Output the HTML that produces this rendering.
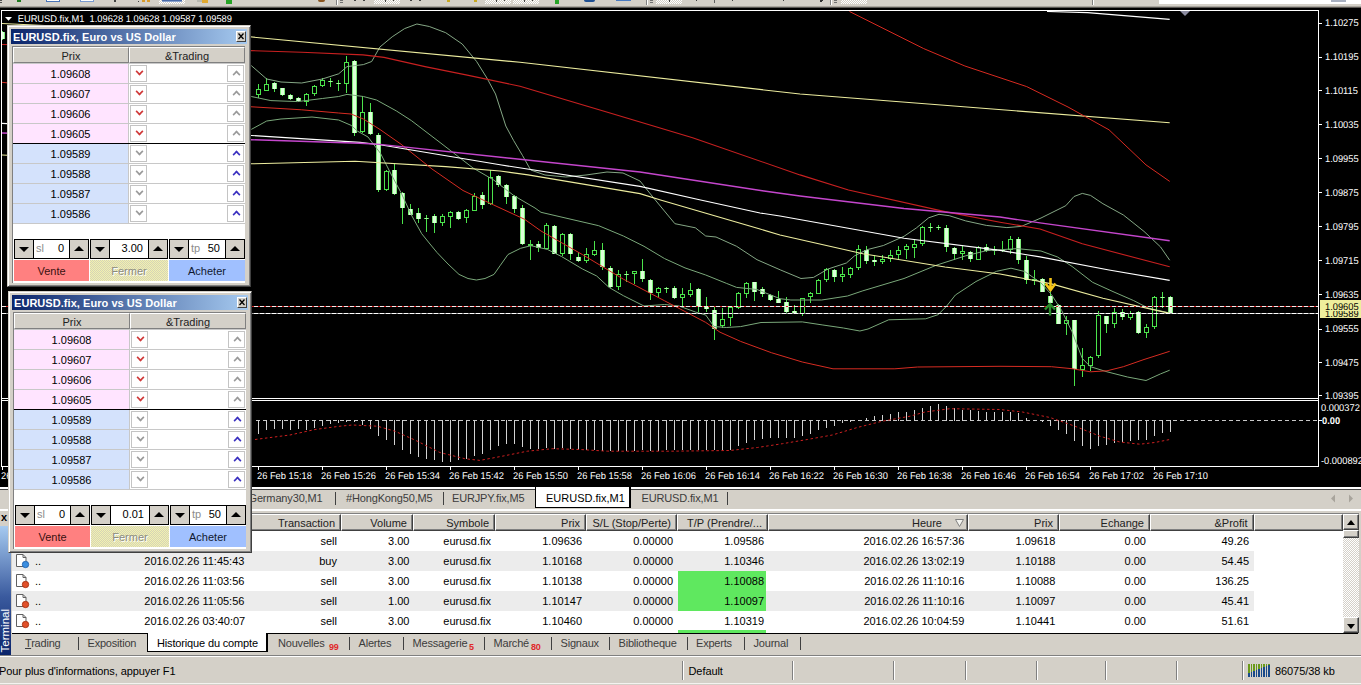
<!DOCTYPE html>
<html><head><meta charset="utf-8"><title>EURUSD.fix,M1</title>
<style>
*{box-sizing:border-box;margin:0;padding:0}
html,body{width:1361px;height:685px;overflow:hidden;background:#d4d0c8}
body{position:relative;font-family:"Liberation Sans",Arial,sans-serif;font-size:11px;color:#000;line-height:1}
i{font-style:normal}
.abs{position:absolute}
/* toolbar strip */
#tb{position:absolute;left:0;top:0;width:1361px;height:6px;background:#d4d0c8;overflow:hidden}
#tb i{position:absolute;display:block}
#tbl1{position:absolute;left:0;top:6px;width:1361px;height:1px;background:#aaa69e}
#tbl2{position:absolute;left:0;top:7px;width:1361px;height:1px;background:#5a5854}
/* dialogs */
.dlg{position:absolute;width:244px;height:262px;background:#d4d0c8;border:1px solid;border-color:#d4d0c8 #404040 #404040 #d4d0c8;box-shadow:inset 1px 1px 0 #fff, inset -1px -1px 0 #808080}
.ttl{position:absolute;left:3px;top:3px;width:236px;height:15px;background:linear-gradient(90deg,#0a246a 0%,#a6caf0 100%);color:#fff;font-weight:bold;font-size:11px}
.ttl span{position:absolute;left:2px;top:2.5px;white-space:nowrap;letter-spacing:0.05px}
.cls{position:absolute;right:1px;top:2px;width:10px;height:11px;background:#d4d0c8;border:1px solid;border-color:#fff #404040 #404040 #fff;display:block}
.cls svg{position:absolute;left:0;top:0}
.lst{position:absolute;left:4px;top:20px;width:233px;height:237px;background:#fff;border-left:1px solid #808080;border-top:1px solid #808080}
.hd{position:absolute;left:0;top:0;width:232px;height:16px}
.hd div{position:absolute;top:0;height:16px;background:#d4d0c8;border:1px solid;border-color:#fff #808080 #808080 #fff;text-align:center;padding-top:3px;color:#222}
.h1{left:0;width:116px}.h2{left:116px;width:116px}
.r{position:relative;height:20px;width:232px;border-top:1px solid #c8c8c8}
.r:last-child{height:21px;border-bottom:1px solid #c8c8c8}
.r:nth-child(2){margin-top:16px}
.r.first{border-top:1px solid #000}
.r .p{position:absolute;left:0;top:0;width:115px;height:19px;text-align:center;padding-top:4.5px;border-right:0}

.ask .p{background:#ffe4ff}.bid .p{background:#d4e2fc}
.r .t{position:absolute;left:115px;top:0;width:117px;height:19px;border-left:1px solid #c8c8c8;background:#fff}
.b{position:absolute;top:1px;width:17px;height:17px;border:1px solid #c4c4c4;background:#fff;display:block}

.b.dn{left:1px}.b.up{right:1px}
.b:after{content:"";position:absolute;left:4.5px;width:5px;height:5px;border:solid;border-width:0 2px 2px 0}
.b.dn:after{top:1.5px;transform:rotate(45deg) scale(.8)}
.b.up:after{top:4.5px;transform:rotate(-135deg) scale(.8)}
.red:after{border-color:#d03838}.gry:after{border-color:#9a9a9a}.blu:after{border-color:#3a30c0}
.spn{position:absolute;left:6px;top:213px;width:231px;height:20px}
.sg{position:absolute;top:0;height:20px;border:1px solid #000;background:#fff}
.ab{position:absolute;top:0;width:18px;height:18px;background:#d4d0c8;display:block}
.ab.d{left:0;border-right:1px solid #000;width:19px}
.ab.u{right:0;border-left:1px solid #000;width:19px}
.ab:after{content:"";position:absolute;left:4px;top:7px;border:5px solid transparent}
.ab.d:after{border-top:5px solid #000;border-bottom:0}
.ab.u:after{border-bottom:5px solid #000;border-top:0;top:6px}
.fld{position:absolute;left:19px;top:0;height:18px;font-size:11px}
.fld em{position:absolute;left:2px;top:3px;color:#8c8c8c;font-style:normal}
.fld b{position:absolute;right:5px;top:3px;font-weight:normal}
.btns{position:absolute;left:6px;top:234px;width:231px;height:21px}
.bt{position:absolute;top:0;height:21px;text-align:center;padding-top:6px;font-size:11px}
.sell{left:0;width:75px;background:#ff8080;color:#3a1010}
.cl{left:76px;width:78px;background:#e4e2b2;background-image:repeating-conic-gradient(#f2f2b0 0 25%,#d6d3b6 0 50%);background-size:2px 2px;color:#8a8a80;text-shadow:1px 1px 0 #fff}
.buy{left:155px;width:76px;background:#a0c0ff;color:#101830}
/* chart tabs */
#ctabs{position:absolute;left:0;top:489px;width:1361px;height:20px;border-top:1px solid #404040;background:#d4d0c8;color:#3c3c3c;white-space:nowrap}
#ctabs span{position:absolute;top:3px;letter-spacing:-0.15px}
#ctabs i{position:absolute;top:2px;width:1px;height:13px;background:#404040;display:block}
#ctl{position:absolute;left:0;top:487px;width:1361px;height:2px;background:#fff}
#atab{position:absolute;left:535px;top:487px;width:96px;height:21px;background:#fff;border:1px solid #000;border-top:0;border-right-width:2px;color:#000}
#atab span{position:absolute;left:10px;top:6px}
/* terminal */
#tsep{position:absolute;left:0;top:509px;width:1361px;height:2px;background:#fff}
#tside{position:absolute;left:0;top:526px;width:11px;height:129px;background:linear-gradient(180deg,#a6caf0 0%,#3a5a9e 55%,#0a246a 100%)}
#tside span{position:absolute;left:0;bottom:3px;width:11px;color:#fff;writing-mode:vertical-rl;transform:rotate(180deg);font-size:11.5px;line-height:11px;white-space:nowrap}
#tx{position:absolute;left:1px;top:512px;font-weight:bold;font-size:11px}
#tbl{position:absolute;left:12px;top:513px;width:1346px;height:120px;background:#fff}
.th{position:absolute;top:514px;height:17px;background:#d4d0c8;border:1px solid;border-color:#fff #404040 #404040 #fff;box-shadow:inset -1px -1px 0 #808080;color:#222;white-space:nowrap}
.th span{position:absolute;top:3px;margin-right:-1px}
.tr{position:absolute;left:12px;width:1242px;height:20px;background:#fff;white-space:nowrap}
.tr.alt{background:#ececec}
.tr .c{position:absolute;top:4.5px}
.tr .ic{position:absolute;left:3px;top:2px}
.gc{position:absolute;left:666px;top:0;width:88px;height:20px;background:#5fe85f}
#sb{position:absolute;left:1343px;top:514px;width:16px;height:119px;background:#e9e7e3;background-image:repeating-conic-gradient(#fff 0 25%,#d4d0c8 0 50%);background-size:2px 2px}
.sbb{position:absolute;left:0;width:16px;height:16px;background:#d4d0c8;border:1px solid;border-color:#fff #404040 #404040 #fff;box-shadow:inset -1px -1px 0 #808080}
.sbb:after{content:"";position:absolute;left:3px;top:5px;border:4px solid transparent}
.sbb.u:after{border-bottom:5px solid #000;border-top:0}
.sbb.d:after{border-top:5px solid #000;border-bottom:0;top:6px}
#tbot{position:absolute;left:12px;top:633px;width:1346px;height:1px;background:#000}
#ttabs{position:absolute;left:12px;top:634px;width:1349px;height:20px;color:#3c3c3c;white-space:nowrap}
#ttabs span{position:absolute;top:4px;letter-spacing:-0.2px}
#ttabs i{position:absolute;top:3px;width:1px;height:13px;background:#404040;display:block}
#ttabs b{position:absolute;top:9px;color:#e02828;font-size:9px;font-weight:bold;letter-spacing:-0.3px}
#tatab{position:absolute;left:147px;top:633px;width:121px;height:19px;background:#fff;border:1px solid #000;border-top:0;border-right-width:2px;color:#000}
#tatab span{position:absolute;left:9px;top:5px;white-space:nowrap;letter-spacing:-0.15px}
/* status */
#sl1{position:absolute;left:0;top:655px;width:1361px;height:1px;background:#808080}
#sl2{position:absolute;left:0;top:656px;width:1361px;height:1px;background:#fff}
#st{position:absolute;left:0;top:657px;width:1361px;height:28px;background:#d4d0c8;white-space:nowrap}
#st span{position:absolute;top:9px;font-size:11px;color:#000;letter-spacing:-0.08px}
#st i{position:absolute;top:4px;width:2px;height:19px;border-left:1px solid #808080;border-right:1px solid #fff;display:block}
#stb{position:absolute;left:0;top:683px;width:1361px;height:1px;background:#f4f3f0}
</style></head><body>
<div id="tb">
<i style="left:0px;top:0px;width:2px;height:1px;background:#505050"></i>
<i style="left:0px;top:2px;width:2px;height:1px;background:#505050"></i>
<i style="left:17px;top:0px;width:4px;height:2px;background:#1f7a1f"></i>
<i style="left:46px;top:0px;width:14px;height:2px;background:#fff;border:1px solid #4a74b8;border-top:0"></i>
<i style="left:80px;top:0px;width:14px;height:2px;background:#fff;border:1px solid #7a9ad0;border-top:0"></i>
<i style="left:114px;top:0px;width:2px;height:2px;background:#404040"></i>
<i style="left:138px;top:1px;width:1px;height:1px;background:#404040"></i>
<i style="left:142px;top:0px;width:3px;height:2px;background:#d89a2a"></i>
<i style="left:147px;top:0px;width:3px;height:2px;background:#d89a2a"></i>
<i style="left:159px;top:0px;width:26px;height:4px;background:#ebe9e4;background-image:repeating-conic-gradient(#fff 0 25%,#d4d0c8 0 50%);background-size:2px 2px"></i>
<i style="left:162px;top:0px;width:20px;height:1px;background:#4a6aa8"></i>
<i style="left:162px;top:1px;width:20px;height:1px;background:#8aa2cc"></i>
<i style="left:197px;top:0px;width:5px;height:2px;background:#b8b8b0"></i>
<i style="left:202px;top:0px;width:6px;height:3px;background:#e0a830"></i>
<i style="left:226px;top:0px;width:6px;height:4px;background:#28a428"></i>
<i style="left:318px;top:0px;width:7px;height:2px;background:#8a5520;border-radius:0 0 4px 4px"></i>
<i style="left:336px;top:0;width:2px;height:5px;border-left:1px solid #808080;border-right:1px solid #fff"></i>
<i style="left:340px;top:0px;width:3px;height:1px;background:#707070"></i><i style="left:340px;top:2px;width:3px;height:1px;background:#707070"></i>
<i style="left:354px;top:0px;width:2px;height:1px;background:#404040"></i>
<i style="left:363px;top:0px;width:2px;height:1px;background:#404040"></i>
<i style="left:374px;top:0px;width:26px;height:4px;background:#ebe9e4;background-image:repeating-conic-gradient(#fff 0 25%,#d4d0c8 0 50%);background-size:2px 2px"></i>
<i style="left:385px;top:0px;width:1px;height:2px;background:#404040"></i>
<i style="left:393px;top:0px;width:1px;height:1px;background:#404040"></i>
<i style="left:410px;top:0px;width:2px;height:1px;background:#404040"></i>
<i style="left:419px;top:0px;width:2px;height:1px;background:#404040"></i>
<i style="left:447px;top:0px;width:3px;height:2px;background:#c8a820"></i>
<i style="left:474px;top:0px;width:3px;height:2px;background:#c8a820"></i>
<i style="left:485px;top:0px;width:26px;height:4px;background:#ebe9e4;background-image:repeating-conic-gradient(#fff 0 25%,#d4d0c8 0 50%);background-size:2px 2px"></i>
<i style="left:496px;top:0px;width:1px;height:2px;background:#404040"></i>
<i style="left:504px;top:0px;width:1px;height:1px;background:#404040"></i>
<i style="left:513px;top:0px;width:26px;height:4px;background:#ebe9e4;background-image:repeating-conic-gradient(#fff 0 25%,#d4d0c8 0 50%);background-size:2px 2px"></i>
<i style="left:524px;top:0px;width:1px;height:2px;background:#404040"></i>
<i style="left:532px;top:0px;width:1px;height:1px;background:#404040"></i>
<i style="left:555px;top:0px;width:4px;height:4px;background:#28a428"></i>
<i style="left:584px;top:0px;width:11px;height:2px;background:#1f4f92;border-radius:0 0 6px 6px"></i>
<i style="left:616px;top:0px;width:15px;height:1px;background:#4a7ac0"></i>
<i style="left:646px;top:0;width:2px;height:5px;border-left:1px solid #808080;border-right:1px solid #fff"></i>
<i style="left:650px;top:0px;width:3px;height:1px;background:#707070"></i><i style="left:650px;top:2px;width:3px;height:1px;background:#707070"></i>
<i style="left:656px;top:0px;width:26px;height:4px;background:#ebe9e4;background-image:repeating-conic-gradient(#fff 0 25%,#d4d0c8 0 50%);background-size:2px 2px"></i>
<i style="left:669px;top:0px;width:1px;height:2px;background:#404040"></i>
<i style="left:696px;top:0px;width:1px;height:1px;background:#404040"></i>
<i style="left:714px;top:0px;width:1px;height:3px;background:#606060"></i>
<i style="left:732px;top:0px;width:1px;height:1px;background:#404040"></i>
<i style="left:783px;top:0px;width:1px;height:1px;background:#404040"></i>
<i style="left:820px;top:0px;width:3px;height:1px;background:#303030"></i>
<i style="left:820px;top:1px;width:2px;height:1px;background:#303030"></i>
<i style="left:830px;top:0;width:2px;height:5px;border-left:1px solid #808080;border-right:1px solid #fff"></i>
<i style="left:834px;top:0px;width:3px;height:1px;background:#707070"></i><i style="left:834px;top:2px;width:3px;height:1px;background:#707070"></i>
<i style="left:841px;top:0px;width:26px;height:4px;background:#ebe9e4;background-image:repeating-conic-gradient(#fff 0 25%,#d4d0c8 0 50%);background-size:2px 2px"></i>
<i style="left:1092px;top:0;width:2px;height:5px;border-left:1px solid #808080;border-right:1px solid #fff"></i>
<i style="left:1159px;top:0px;width:202px;height:4px;background:#fff"></i>
<i style="left:1331px;top:0px;width:15px;height:2px;background:#a8b0c0"></i>
</div>
<div id="tbl1"></div><div id="tbl2"></div>
<svg id="chart" width="1361" height="490" viewBox="0 0 1361 490" style="position:absolute;left:0;top:0">
<rect x="0" y="8" width="1361" height="482" fill="#000"/>
<defs><clipPath id="cm"><rect x="2" y="11" width="1316" height="387"/></clipPath><clipPath id="cs"><rect x="2" y="401" width="1316" height="65"/></clipPath></defs>
<g clip-path="url(#cm)" shape-rendering="crispEdges">
<rect x="2" y="31" width="1" height="9" fill="#4be34b"/>
<rect x="0" y="32" width="5" height="7" fill="#7cec78"/>
<rect x="1" y="32" width="3" height="7" fill="#dcffd8"/>
<rect x="258" y="84" width="1" height="14" fill="#4be34b"/>
<rect x="256.5" y="89.5" width="4" height="5" fill="#000" stroke="#4be34b" stroke-width="1"/>
<rect x="266" y="78" width="1" height="13" fill="#4be34b"/>
<rect x="264.5" y="84.5" width="4" height="6" fill="#000" stroke="#4be34b" stroke-width="1"/>
<rect x="274" y="82" width="1" height="10" fill="#4be34b"/>
<rect x="272" y="83" width="5" height="6" fill="#7cec78"/>
<rect x="273" y="83" width="3" height="6" fill="#dcffd8"/>
<rect x="282" y="88" width="1" height="8" fill="#4be34b"/>
<rect x="280" y="88" width="5" height="7" fill="#7cec78"/>
<rect x="281" y="88" width="3" height="7" fill="#dcffd8"/>
<rect x="290" y="94" width="1" height="6" fill="#4be34b"/>
<rect x="288" y="95" width="5" height="4" fill="#7cec78"/>
<rect x="289" y="95" width="3" height="4" fill="#dcffd8"/>
<rect x="298" y="97" width="1" height="5" fill="#4be34b"/>
<rect x="296" y="98" width="5" height="3" fill="#7cec78"/>
<rect x="297" y="98" width="3" height="3" fill="#dcffd8"/>
<rect x="306" y="93" width="1" height="13" fill="#4be34b"/>
<rect x="304.5" y="94.5" width="4" height="7" fill="#000" stroke="#4be34b" stroke-width="1"/>
<rect x="314" y="85" width="1" height="11" fill="#4be34b"/>
<rect x="312.5" y="86.5" width="4" height="7" fill="#000" stroke="#4be34b" stroke-width="1"/>
<rect x="322" y="78" width="1" height="9" fill="#4be34b"/>
<rect x="320.5" y="80.5" width="4" height="5" fill="#000" stroke="#4be34b" stroke-width="1"/>
<rect x="330" y="78" width="1" height="9" fill="#4be34b"/>
<rect x="328" y="81" width="5" height="1" fill="#4be34b"/>
<rect x="329" y="81" width="3" height="1" fill="#a8f5a0"/>
<rect x="338" y="80" width="1" height="11" fill="#4be34b"/>
<rect x="336" y="83" width="5" height="1" fill="#4be34b"/>
<rect x="337" y="83" width="3" height="1" fill="#a8f5a0"/>
<rect x="346" y="56" width="1" height="37" fill="#4be34b"/>
<rect x="344.5" y="62.5" width="4" height="21" fill="#000" stroke="#4be34b" stroke-width="1"/>
<rect x="354" y="60" width="1" height="76" fill="#4be34b"/>
<rect x="352" y="61" width="5" height="72" fill="#7cec78"/>
<rect x="353" y="61" width="3" height="72" fill="#dcffd8"/>
<rect x="362" y="96" width="1" height="37" fill="#4be34b"/>
<rect x="360.5" y="112.5" width="4" height="19" fill="#000" stroke="#4be34b" stroke-width="1"/>
<rect x="370" y="103" width="1" height="32" fill="#4be34b"/>
<rect x="368" y="112" width="5" height="22" fill="#7cec78"/>
<rect x="369" y="112" width="3" height="22" fill="#dcffd8"/>
<rect x="378" y="133" width="1" height="59" fill="#4be34b"/>
<rect x="376" y="135" width="5" height="55" fill="#7cec78"/>
<rect x="377" y="135" width="3" height="55" fill="#dcffd8"/>
<rect x="386" y="170" width="1" height="21" fill="#4be34b"/>
<rect x="384.5" y="171.5" width="4" height="18" fill="#000" stroke="#4be34b" stroke-width="1"/>
<rect x="394" y="163" width="1" height="32" fill="#4be34b"/>
<rect x="392" y="170" width="5" height="24" fill="#7cec78"/>
<rect x="393" y="170" width="3" height="24" fill="#dcffd8"/>
<rect x="402" y="192" width="1" height="32" fill="#4be34b"/>
<rect x="400" y="193" width="5" height="15" fill="#7cec78"/>
<rect x="401" y="193" width="3" height="15" fill="#dcffd8"/>
<rect x="410" y="204" width="1" height="11" fill="#4be34b"/>
<rect x="408" y="209" width="5" height="6" fill="#7cec78"/>
<rect x="409" y="209" width="3" height="6" fill="#dcffd8"/>
<rect x="418" y="208" width="1" height="15" fill="#4be34b"/>
<rect x="416" y="213" width="5" height="6" fill="#7cec78"/>
<rect x="417" y="213" width="3" height="6" fill="#dcffd8"/>
<rect x="426" y="215" width="1" height="17" fill="#4be34b"/>
<rect x="424" y="218" width="5" height="1" fill="#4be34b"/>
<rect x="425" y="218" width="3" height="1" fill="#a8f5a0"/>
<rect x="434" y="214" width="1" height="19" fill="#4be34b"/>
<rect x="432" y="216" width="5" height="7" fill="#7cec78"/>
<rect x="433" y="216" width="3" height="7" fill="#dcffd8"/>
<rect x="442" y="214" width="1" height="12" fill="#4be34b"/>
<rect x="440.5" y="216.5" width="4" height="6" fill="#000" stroke="#4be34b" stroke-width="1"/>
<rect x="450" y="211" width="1" height="17" fill="#4be34b"/>
<rect x="448.5" y="212.5" width="4" height="4" fill="#000" stroke="#4be34b" stroke-width="1"/>
<rect x="458" y="211" width="1" height="9" fill="#4be34b"/>
<rect x="456" y="212" width="5" height="7" fill="#7cec78"/>
<rect x="457" y="212" width="3" height="7" fill="#dcffd8"/>
<rect x="466" y="209" width="1" height="14" fill="#4be34b"/>
<rect x="464.5" y="210.5" width="4" height="7" fill="#000" stroke="#4be34b" stroke-width="1"/>
<rect x="474" y="193" width="1" height="18" fill="#4be34b"/>
<rect x="472.5" y="196.5" width="4" height="14" fill="#000" stroke="#4be34b" stroke-width="1"/>
<rect x="482" y="192" width="1" height="17" fill="#4be34b"/>
<rect x="480" y="195" width="5" height="10" fill="#7cec78"/>
<rect x="481" y="195" width="3" height="10" fill="#dcffd8"/>
<rect x="490" y="170" width="1" height="35" fill="#4be34b"/>
<rect x="488.5" y="177.5" width="4" height="26" fill="#000" stroke="#4be34b" stroke-width="1"/>
<rect x="498" y="175" width="1" height="12" fill="#4be34b"/>
<rect x="496" y="176" width="5" height="9" fill="#7cec78"/>
<rect x="497" y="176" width="3" height="9" fill="#dcffd8"/>
<rect x="506" y="184" width="1" height="20" fill="#4be34b"/>
<rect x="504" y="185" width="5" height="12" fill="#7cec78"/>
<rect x="505" y="185" width="3" height="12" fill="#dcffd8"/>
<rect x="514" y="195" width="1" height="18" fill="#4be34b"/>
<rect x="512" y="196" width="5" height="13" fill="#7cec78"/>
<rect x="513" y="196" width="3" height="13" fill="#dcffd8"/>
<rect x="522" y="205" width="1" height="40" fill="#4be34b"/>
<rect x="520" y="208" width="5" height="36" fill="#7cec78"/>
<rect x="521" y="208" width="3" height="36" fill="#dcffd8"/>
<rect x="530" y="240" width="1" height="20" fill="#4be34b"/>
<rect x="528.5" y="244.5" width="4" height="1" fill="#000" stroke="#4be34b" stroke-width="1"/>
<rect x="538" y="241" width="1" height="11" fill="#4be34b"/>
<rect x="536" y="244" width="5" height="4" fill="#7cec78"/>
<rect x="537" y="244" width="3" height="4" fill="#dcffd8"/>
<rect x="546" y="223" width="1" height="26" fill="#4be34b"/>
<rect x="544.5" y="225.5" width="4" height="23" fill="#000" stroke="#4be34b" stroke-width="1"/>
<rect x="554" y="225" width="1" height="29" fill="#4be34b"/>
<rect x="552" y="226" width="5" height="28" fill="#7cec78"/>
<rect x="553" y="226" width="3" height="28" fill="#dcffd8"/>
<rect x="562" y="233" width="1" height="23" fill="#4be34b"/>
<rect x="560.5" y="234.5" width="4" height="19" fill="#000" stroke="#4be34b" stroke-width="1"/>
<rect x="570" y="233" width="1" height="27" fill="#4be34b"/>
<rect x="568" y="234" width="5" height="20" fill="#7cec78"/>
<rect x="569" y="234" width="3" height="20" fill="#dcffd8"/>
<rect x="578" y="252" width="1" height="10" fill="#4be34b"/>
<rect x="576" y="257" width="5" height="4" fill="#7cec78"/>
<rect x="577" y="257" width="3" height="4" fill="#dcffd8"/>
<rect x="586" y="248" width="1" height="15" fill="#4be34b"/>
<rect x="584.5" y="254.5" width="4" height="6" fill="#000" stroke="#4be34b" stroke-width="1"/>
<rect x="594" y="241" width="1" height="15" fill="#4be34b"/>
<rect x="592.5" y="250.5" width="4" height="4" fill="#000" stroke="#4be34b" stroke-width="1"/>
<rect x="602" y="243" width="1" height="27" fill="#4be34b"/>
<rect x="600" y="250" width="5" height="17" fill="#7cec78"/>
<rect x="601" y="250" width="3" height="17" fill="#dcffd8"/>
<rect x="610" y="266" width="1" height="22" fill="#4be34b"/>
<rect x="608" y="268" width="5" height="19" fill="#7cec78"/>
<rect x="609" y="268" width="3" height="19" fill="#dcffd8"/>
<rect x="618" y="270" width="1" height="20" fill="#4be34b"/>
<rect x="616.5" y="274.5" width="4" height="12" fill="#000" stroke="#4be34b" stroke-width="1"/>
<rect x="626" y="271" width="1" height="11" fill="#4be34b"/>
<rect x="624" y="274" width="5" height="1" fill="#4be34b"/>
<rect x="625" y="274" width="3" height="1" fill="#a8f5a0"/>
<rect x="634" y="271" width="1" height="13" fill="#4be34b"/>
<rect x="632.5" y="271.5" width="4" height="2" fill="#000" stroke="#4be34b" stroke-width="1"/>
<rect x="642" y="259" width="1" height="23" fill="#4be34b"/>
<rect x="640" y="271" width="5" height="8" fill="#7cec78"/>
<rect x="641" y="271" width="3" height="8" fill="#dcffd8"/>
<rect x="650" y="279" width="1" height="21" fill="#4be34b"/>
<rect x="648" y="280" width="5" height="13" fill="#7cec78"/>
<rect x="649" y="280" width="3" height="13" fill="#dcffd8"/>
<rect x="658" y="287" width="1" height="10" fill="#4be34b"/>
<rect x="656.5" y="288.5" width="4" height="4" fill="#000" stroke="#4be34b" stroke-width="1"/>
<rect x="666" y="287" width="1" height="6" fill="#4be34b"/>
<rect x="664" y="288" width="5" height="1" fill="#4be34b"/>
<rect x="665" y="288" width="3" height="1" fill="#a8f5a0"/>
<rect x="674" y="286" width="1" height="13" fill="#4be34b"/>
<rect x="672" y="288" width="5" height="10" fill="#7cec78"/>
<rect x="673" y="288" width="3" height="10" fill="#dcffd8"/>
<rect x="682" y="288" width="1" height="19" fill="#4be34b"/>
<rect x="680.5" y="294.5" width="4" height="3" fill="#000" stroke="#4be34b" stroke-width="1"/>
<rect x="690" y="283" width="1" height="14" fill="#4be34b"/>
<rect x="688.5" y="290.5" width="4" height="4" fill="#000" stroke="#4be34b" stroke-width="1"/>
<rect x="698" y="288" width="1" height="24" fill="#4be34b"/>
<rect x="696" y="289" width="5" height="17" fill="#7cec78"/>
<rect x="697" y="289" width="3" height="17" fill="#dcffd8"/>
<rect x="706" y="297" width="1" height="15" fill="#4be34b"/>
<rect x="704" y="306" width="5" height="3" fill="#7cec78"/>
<rect x="705" y="306" width="3" height="3" fill="#dcffd8"/>
<rect x="714" y="307" width="1" height="33" fill="#4be34b"/>
<rect x="712" y="310" width="5" height="19" fill="#7cec78"/>
<rect x="713" y="310" width="3" height="19" fill="#dcffd8"/>
<rect x="722" y="308" width="1" height="20" fill="#4be34b"/>
<rect x="720.5" y="319.5" width="4" height="6" fill="#000" stroke="#4be34b" stroke-width="1"/>
<rect x="730" y="306" width="1" height="20" fill="#4be34b"/>
<rect x="728.5" y="307.5" width="4" height="10" fill="#000" stroke="#4be34b" stroke-width="1"/>
<rect x="738" y="292" width="1" height="17" fill="#4be34b"/>
<rect x="736.5" y="293.5" width="4" height="14" fill="#000" stroke="#4be34b" stroke-width="1"/>
<rect x="746" y="282" width="1" height="16" fill="#4be34b"/>
<rect x="744.5" y="283.5" width="4" height="10" fill="#000" stroke="#4be34b" stroke-width="1"/>
<rect x="754" y="282" width="1" height="19" fill="#4be34b"/>
<rect x="752" y="282" width="5" height="10" fill="#7cec78"/>
<rect x="753" y="282" width="3" height="10" fill="#dcffd8"/>
<rect x="762" y="287" width="1" height="10" fill="#4be34b"/>
<rect x="760" y="289" width="5" height="5" fill="#7cec78"/>
<rect x="761" y="289" width="3" height="5" fill="#dcffd8"/>
<rect x="770" y="294" width="1" height="7" fill="#4be34b"/>
<rect x="768" y="295" width="5" height="5" fill="#7cec78"/>
<rect x="769" y="295" width="3" height="5" fill="#dcffd8"/>
<rect x="778" y="291" width="1" height="12" fill="#4be34b"/>
<rect x="776" y="299" width="5" height="4" fill="#7cec78"/>
<rect x="777" y="299" width="3" height="4" fill="#dcffd8"/>
<rect x="786" y="297" width="1" height="16" fill="#4be34b"/>
<rect x="784" y="302" width="5" height="10" fill="#7cec78"/>
<rect x="785" y="302" width="3" height="10" fill="#dcffd8"/>
<rect x="794" y="305" width="1" height="9" fill="#4be34b"/>
<rect x="792" y="311" width="5" height="2" fill="#7cec78"/>
<rect x="793" y="311" width="3" height="2" fill="#dcffd8"/>
<rect x="802" y="298" width="1" height="18" fill="#4be34b"/>
<rect x="800.5" y="298.5" width="4" height="15" fill="#000" stroke="#4be34b" stroke-width="1"/>
<rect x="810" y="292" width="1" height="11" fill="#4be34b"/>
<rect x="808.5" y="293.5" width="4" height="3" fill="#000" stroke="#4be34b" stroke-width="1"/>
<rect x="818" y="279" width="1" height="15" fill="#4be34b"/>
<rect x="816.5" y="280.5" width="4" height="13" fill="#000" stroke="#4be34b" stroke-width="1"/>
<rect x="826" y="268" width="1" height="14" fill="#4be34b"/>
<rect x="824.5" y="269.5" width="4" height="10" fill="#000" stroke="#4be34b" stroke-width="1"/>
<rect x="834" y="269" width="1" height="13" fill="#4be34b"/>
<rect x="832" y="270" width="5" height="7" fill="#7cec78"/>
<rect x="833" y="270" width="3" height="7" fill="#dcffd8"/>
<rect x="842" y="267" width="1" height="15" fill="#4be34b"/>
<rect x="840.5" y="274.5" width="4" height="2" fill="#000" stroke="#4be34b" stroke-width="1"/>
<rect x="850" y="267" width="1" height="11" fill="#4be34b"/>
<rect x="848.5" y="268.5" width="4" height="6" fill="#000" stroke="#4be34b" stroke-width="1"/>
<rect x="858" y="245" width="1" height="25" fill="#4be34b"/>
<rect x="856.5" y="249.5" width="4" height="18" fill="#000" stroke="#4be34b" stroke-width="1"/>
<rect x="866" y="246" width="1" height="18" fill="#4be34b"/>
<rect x="864" y="250" width="5" height="11" fill="#7cec78"/>
<rect x="865" y="250" width="3" height="11" fill="#dcffd8"/>
<rect x="874" y="255" width="1" height="11" fill="#4be34b"/>
<rect x="872" y="260" width="5" height="2" fill="#7cec78"/>
<rect x="873" y="260" width="3" height="2" fill="#dcffd8"/>
<rect x="882" y="255" width="1" height="9" fill="#4be34b"/>
<rect x="880.5" y="259.5" width="4" height="2" fill="#000" stroke="#4be34b" stroke-width="1"/>
<rect x="890" y="250" width="1" height="12" fill="#4be34b"/>
<rect x="888.5" y="255.5" width="4" height="3" fill="#000" stroke="#4be34b" stroke-width="1"/>
<rect x="898" y="246" width="1" height="14" fill="#4be34b"/>
<rect x="896.5" y="250.5" width="4" height="4" fill="#000" stroke="#4be34b" stroke-width="1"/>
<rect x="906" y="244" width="1" height="15" fill="#4be34b"/>
<rect x="904.5" y="246.5" width="4" height="3" fill="#000" stroke="#4be34b" stroke-width="1"/>
<rect x="914" y="239" width="1" height="19" fill="#4be34b"/>
<rect x="912.5" y="244.5" width="4" height="3" fill="#000" stroke="#4be34b" stroke-width="1"/>
<rect x="922" y="226" width="1" height="20" fill="#4be34b"/>
<rect x="920.5" y="227.5" width="4" height="16" fill="#000" stroke="#4be34b" stroke-width="1"/>
<rect x="930" y="223" width="1" height="9" fill="#4be34b"/>
<rect x="928" y="227" width="5" height="1" fill="#4be34b"/>
<rect x="929" y="227" width="3" height="1" fill="#a8f5a0"/>
<rect x="938" y="225" width="1" height="5" fill="#4be34b"/>
<rect x="936" y="227" width="5" height="1" fill="#4be34b"/>
<rect x="937" y="227" width="3" height="1" fill="#a8f5a0"/>
<rect x="946" y="225" width="1" height="27" fill="#4be34b"/>
<rect x="944" y="228" width="5" height="19" fill="#7cec78"/>
<rect x="945" y="228" width="3" height="19" fill="#dcffd8"/>
<rect x="954" y="247" width="1" height="13" fill="#4be34b"/>
<rect x="952" y="248" width="5" height="6" fill="#7cec78"/>
<rect x="953" y="248" width="3" height="6" fill="#dcffd8"/>
<rect x="962" y="246" width="1" height="14" fill="#4be34b"/>
<rect x="960.5" y="251.5" width="4" height="2" fill="#000" stroke="#4be34b" stroke-width="1"/>
<rect x="970" y="251" width="1" height="11" fill="#4be34b"/>
<rect x="968" y="252" width="5" height="7" fill="#7cec78"/>
<rect x="969" y="252" width="3" height="7" fill="#dcffd8"/>
<rect x="978" y="246" width="1" height="14" fill="#4be34b"/>
<rect x="976.5" y="247.5" width="4" height="12" fill="#000" stroke="#4be34b" stroke-width="1"/>
<rect x="986" y="244" width="1" height="8" fill="#4be34b"/>
<rect x="984" y="247" width="5" height="4" fill="#7cec78"/>
<rect x="985" y="247" width="3" height="4" fill="#dcffd8"/>
<rect x="994" y="246" width="1" height="9" fill="#4be34b"/>
<rect x="992" y="249" width="5" height="2" fill="#7cec78"/>
<rect x="993" y="249" width="3" height="2" fill="#dcffd8"/>
<rect x="1002" y="241" width="1" height="11" fill="#4be34b"/>
<rect x="1000" y="250" width="5" height="1" fill="#4be34b"/>
<rect x="1001" y="250" width="3" height="1" fill="#a8f5a0"/>
<rect x="1010" y="236" width="1" height="18" fill="#4be34b"/>
<rect x="1008.5" y="239.5" width="4" height="10" fill="#000" stroke="#4be34b" stroke-width="1"/>
<rect x="1018" y="237" width="1" height="27" fill="#4be34b"/>
<rect x="1016" y="239" width="5" height="21" fill="#7cec78"/>
<rect x="1017" y="239" width="3" height="21" fill="#dcffd8"/>
<rect x="1026" y="256" width="1" height="28" fill="#4be34b"/>
<rect x="1024" y="260" width="5" height="20" fill="#7cec78"/>
<rect x="1025" y="260" width="3" height="20" fill="#dcffd8"/>
<rect x="1034" y="270" width="1" height="15" fill="#4be34b"/>
<rect x="1032.5" y="279.5" width="4" height="1" fill="#000" stroke="#4be34b" stroke-width="1"/>
<rect x="1042" y="278" width="1" height="14" fill="#4be34b"/>
<rect x="1040" y="279" width="5" height="13" fill="#7cec78"/>
<rect x="1041" y="279" width="3" height="13" fill="#dcffd8"/>
<rect x="1050" y="292" width="1" height="12" fill="#4be34b"/>
<rect x="1048" y="296" width="5" height="7" fill="#7cec78"/>
<rect x="1049" y="296" width="3" height="7" fill="#dcffd8"/>
<rect x="1058" y="304" width="1" height="20" fill="#4be34b"/>
<rect x="1056" y="305" width="5" height="19" fill="#7cec78"/>
<rect x="1057" y="305" width="3" height="19" fill="#dcffd8"/>
<rect x="1066" y="316" width="1" height="19" fill="#4be34b"/>
<rect x="1064.5" y="320.5" width="4" height="3" fill="#000" stroke="#4be34b" stroke-width="1"/>
<rect x="1074" y="320" width="1" height="66" fill="#4be34b"/>
<rect x="1072" y="320" width="5" height="49" fill="#7cec78"/>
<rect x="1073" y="320" width="3" height="49" fill="#dcffd8"/>
<rect x="1082" y="348" width="1" height="29" fill="#4be34b"/>
<rect x="1080.5" y="365.5" width="4" height="4" fill="#000" stroke="#4be34b" stroke-width="1"/>
<rect x="1090" y="356" width="1" height="15" fill="#4be34b"/>
<rect x="1088.5" y="357.5" width="4" height="8" fill="#000" stroke="#4be34b" stroke-width="1"/>
<rect x="1098" y="311" width="1" height="47" fill="#4be34b"/>
<rect x="1096.5" y="315.5" width="4" height="40" fill="#000" stroke="#4be34b" stroke-width="1"/>
<rect x="1106" y="316" width="1" height="17" fill="#4be34b"/>
<rect x="1104" y="316" width="5" height="8" fill="#7cec78"/>
<rect x="1105" y="316" width="3" height="8" fill="#dcffd8"/>
<rect x="1114" y="308" width="1" height="20" fill="#4be34b"/>
<rect x="1112.5" y="312.5" width="4" height="11" fill="#000" stroke="#4be34b" stroke-width="1"/>
<rect x="1122" y="309" width="1" height="11" fill="#4be34b"/>
<rect x="1120" y="312" width="5" height="5" fill="#7cec78"/>
<rect x="1121" y="312" width="3" height="5" fill="#dcffd8"/>
<rect x="1130" y="311" width="1" height="9" fill="#4be34b"/>
<rect x="1128.5" y="313.5" width="4" height="4" fill="#000" stroke="#4be34b" stroke-width="1"/>
<rect x="1138" y="311" width="1" height="23" fill="#4be34b"/>
<rect x="1136" y="312" width="5" height="21" fill="#7cec78"/>
<rect x="1137" y="312" width="3" height="21" fill="#dcffd8"/>
<rect x="1146" y="324" width="1" height="14" fill="#4be34b"/>
<rect x="1144.5" y="327.5" width="4" height="5" fill="#000" stroke="#4be34b" stroke-width="1"/>
<rect x="1154" y="296" width="1" height="33" fill="#4be34b"/>
<rect x="1152.5" y="297.5" width="4" height="29" fill="#000" stroke="#4be34b" stroke-width="1"/>
<rect x="1162" y="292" width="1" height="16" fill="#4be34b"/>
<rect x="1160" y="297" width="5" height="1" fill="#4be34b"/>
<rect x="1161" y="297" width="3" height="1" fill="#a8f5a0"/>
<rect x="1170" y="296" width="1" height="18" fill="#4be34b"/>
<rect x="1168" y="297" width="5" height="16" fill="#7cec78"/>
<rect x="1169" y="297" width="3" height="16" fill="#dcffd8"/>
</g>
<g clip-path="url(#cm)" fill="none" stroke-linejoin="round">
<polyline points="251.3,65.6 266.7,79 281,82 301.7,83 322.3,79 338.7,73.8 347,66.6 363.4,64.6 371.7,61.5 379.9,47 392.2,36.8 404.6,28.6 416.9,24 429.3,26.5 445.7,32.7 462.2,44 476.6,61.5 486.9,78 495.5,94 505.8,126 513.6,140.5 522.5,155.5 530.7,170 545,175 565.7,177 586,175 607,172 623,173 640,181 655.3,200 674.9,223.7 695.4,227.8 705.7,236 716,237 736.6,246.3 757,259.7 780.6,270 801,278.5 813.5,277.4 828,269 846.4,263 854.6,255.8 867,249.7 883.4,245.5 904,236.3 916.3,228 928.7,217.8 939,214.3 949.3,215.7 965.7,220.9 986.3,225.4 1006.9,227.6 1021.3,226.4 1041,218 1065.8,205.7 1074,196.5 1082.3,193.4 1090.5,195.4 1102.9,203.7 1123.4,215 1144,231.4 1160.5,246.9 1169.7,260.2" stroke="#8cb08c" stroke-width="0.95"/>
<polyline points="251.3,96.5 270.9,100.6 297.6,101.6 322.3,98.5 338.7,96.5 347,94.4 363.4,96.5 376.5,100 396.3,110.9 411.4,120.6 442,144 473,168 493.7,180 514,195.7 535,208 541,212.3 572,219.5 598.7,225.7 623.4,236 644,246.3 664.6,258.6 685,267.9 705.7,275 726.3,283.3 736.6,287.4 757,289.5 780,298.7 790.9,300 821.7,300 847.5,296 862.9,290.8 904,278.5 936.9,265 965.7,255.8 986.3,250.7 1017,248.6 1041,251 1057.6,257 1072,266.4 1092.6,282.3 1113,291.6 1133.7,300.6 1148,308 1169.7,313" stroke="#7aa87a" stroke-width="1.0"/>
<polyline points="251.3,129.4 266.7,121 281,119 312,117 338.7,120 351,125.3 357.3,131 368,137 380.6,153.5 391,174 401,192.6 411.4,215 421.7,233.7 430,244 437,252.5 448,264 459,274.4 468,278.5 476.4,280 485,278.5 494,274.4 500,265.8 508,254.5 520.6,248.3 530.9,245.7 547.3,249.4 561.7,256.6 582.3,268.9 596.7,276 609,287.4 623.4,295.7 644,306 664.6,304.5 679,306 695.4,312 705.7,315 714,326.5 726.3,327.5 740.6,326.6 761,322.5 802.3,321.9 822.9,325 843.4,328 859.9,331 868,329 888.7,319.8 925.7,318.8 938,314.7 946.3,306.5 955.4,295 976,281.5 996.6,271.3 1011,268.2 1024.7,271.5 1041,282.9 1051.4,294.5 1061.7,310.5 1072,331.7 1082.3,358.5 1090.5,366.7 1107,371.8 1127.5,377 1146,380.5 1160.5,373.9 1169.7,370.2" stroke="#7aa87a" stroke-width="1.0"/>
<polyline points="2,23.5 120,29 250,36.8 520,62.3 800,94 1169.7,122.8" stroke="#ecec9e" stroke-width="1.1"/>
<polyline points="2,155 120,160.5 250,163.8 355,161.3 445.7,166.6 500,171 528,174.9 640,193.6 660.5,200 760,229 780,235 862.9,253.8 945,267 1000,274 1040,281.5 1051.4,283.9 1102.9,298.3 1169.7,313.4" stroke="#ecec9e" stroke-width="1.1"/>
<polyline points="2,44.5 120,47 250,50.6 301.7,52.2 363,54.9 384,57.4 425,66.6 466,74.9 520,86.2 610,113 692.6,137.8 800,174.9 848.5,190 945,211.6 1000,222.2 1040,229 1082.3,243.8 1169.7,266.8" stroke="#c82020" stroke-width="1.1"/>
<polyline points="849.5,11.5 923.7,48.6 964.9,66 1026.7,86.6 1068,107 1109,129.8 1146,164.9 1169.7,181.4" stroke="#d82a20" stroke-width="1.0"/>
<polyline points="2,82.3 120,95 250,106.7 301.7,109.8 338.7,113 351,114 363.4,119 380,129.5 401,144.2 432,169 463,190.5 493.7,205 524.6,219.3 541,231 582.3,254.5 623.4,279.2 664.6,300.8 705.7,322.4 720,332.2 740.6,341.4 771.4,352.7 802.3,362 833,368.8 894.9,368.8 917.5,367 1000,366.3 1051.4,366.7 1072,368.7 1090.5,371.8 1107,370.8 1123.4,366.7 1144,359.5 1169.7,351.3" stroke="#d62c22" stroke-width="1.0"/>
<polyline points="2,123.4 251.3,135.5 360,142.4 380,144.8 500,164.8 640,186.4 700.6,200 760,213 780,216 904,238.3 1000,250.4 1040,256.9 1109,270 1169.7,280.4" stroke="#ffffff" stroke-width="1.1"/>
<polyline points="1047,11.5 1087.7,12.6 1169.7,19.4" stroke="#ffffff" stroke-width="1.2"/>
<polyline points="2,133 251.3,139.7 360,143.2 380,144.4 640,172 764,191 800,196 904,208.5 1000,217 1040,222.9 1169.7,240.7" stroke="#c446cc" stroke-width="1.45"/>
</g>
<g shape-rendering="crispEdges">
<line x1="2" y1="306.5" x2="1318" y2="306.5" stroke="#d02020" stroke-width="1"/>
<line x1="2" y1="306.5" x2="1318" y2="306.5" stroke="#f4e8e8" stroke-width="1" stroke-dasharray="4 2"/>
<line x1="2" y1="313.5" x2="1318" y2="313.5" stroke="#9a9a9a" stroke-width="1"/>
<line x1="2" y1="313.5" x2="1318" y2="313.5" stroke="#ffffff" stroke-width="1" stroke-dasharray="4 2"/>
</g>
<g clip-path="url(#cm)">
<path d="M1050.5 278 V289 M1045.5 283.5 L1050.5 290 L1055.5 283.5" stroke="#f5c518" stroke-width="2.6" fill="none" stroke-linejoin="miter"/>
<path d="M1050 315.5 V305 M1045 309.5 L1050 304 L1055 309.5" stroke="#2a8c2a" stroke-width="2.4" fill="none" stroke-linejoin="miter"/>
</g>
<g clip-path="url(#cs)" shape-rendering="crispEdges">
<line x1="256" y1="420.5" x2="1318" y2="420.5" stroke="#c8c8c8" stroke-width="1" stroke-dasharray="4 3"/>
<rect x="258" y="420" width="1" height="14" fill="#d2d2d2"/>
<rect x="266" y="420" width="1" height="10" fill="#d2d2d2"/>
<rect x="274" y="420" width="1" height="9" fill="#d2d2d2"/>
<rect x="282" y="420" width="1" height="9" fill="#d2d2d2"/>
<rect x="290" y="420" width="1" height="10" fill="#d2d2d2"/>
<rect x="298" y="420" width="1" height="9" fill="#d2d2d2"/>
<rect x="306" y="420" width="1" height="10" fill="#d2d2d2"/>
<rect x="314" y="420" width="1" height="8" fill="#d2d2d2"/>
<rect x="322" y="420" width="1" height="6" fill="#d2d2d2"/>
<rect x="330" y="420" width="1" height="4" fill="#d2d2d2"/>
<rect x="338" y="420" width="1" height="3" fill="#d2d2d2"/>
<rect x="346" y="420" width="1" height="2" fill="#d2d2d2"/>
<rect x="354" y="420" width="1" height="2" fill="#d2d2d2"/>
<rect x="362" y="420" width="1" height="5" fill="#d2d2d2"/>
<rect x="370" y="420" width="1" height="9" fill="#d2d2d2"/>
<rect x="378" y="420" width="1" height="16" fill="#d2d2d2"/>
<rect x="386" y="420" width="1" height="20" fill="#d2d2d2"/>
<rect x="394" y="420" width="1" height="25" fill="#d2d2d2"/>
<rect x="402" y="420" width="1" height="30" fill="#d2d2d2"/>
<rect x="410" y="420" width="1" height="34" fill="#d2d2d2"/>
<rect x="418" y="420" width="1" height="37" fill="#d2d2d2"/>
<rect x="426" y="420" width="1" height="39" fill="#d2d2d2"/>
<rect x="434" y="420" width="1" height="40" fill="#d2d2d2"/>
<rect x="442" y="420" width="1" height="42" fill="#d2d2d2"/>
<rect x="450" y="420" width="1" height="42" fill="#d2d2d2"/>
<rect x="458" y="420" width="1" height="40" fill="#d2d2d2"/>
<rect x="466" y="420" width="1" height="39" fill="#d2d2d2"/>
<rect x="474" y="420" width="1" height="36" fill="#d2d2d2"/>
<rect x="482" y="420" width="1" height="34" fill="#d2d2d2"/>
<rect x="490" y="420" width="1" height="30" fill="#d2d2d2"/>
<rect x="498" y="420" width="1" height="26" fill="#d2d2d2"/>
<rect x="506" y="420" width="1" height="24" fill="#d2d2d2"/>
<rect x="514" y="420" width="1" height="24" fill="#d2d2d2"/>
<rect x="522" y="420" width="1" height="27" fill="#d2d2d2"/>
<rect x="530" y="420" width="1" height="29" fill="#d2d2d2"/>
<rect x="538" y="420" width="1" height="29" fill="#d2d2d2"/>
<rect x="546" y="420" width="1" height="28" fill="#d2d2d2"/>
<rect x="554" y="420" width="1" height="29" fill="#d2d2d2"/>
<rect x="562" y="420" width="1" height="28" fill="#d2d2d2"/>
<rect x="570" y="420" width="1" height="29" fill="#d2d2d2"/>
<rect x="578" y="420" width="1" height="30" fill="#d2d2d2"/>
<rect x="586" y="420" width="1" height="30" fill="#d2d2d2"/>
<rect x="594" y="420" width="1" height="30" fill="#d2d2d2"/>
<rect x="602" y="420" width="1" height="31" fill="#d2d2d2"/>
<rect x="610" y="420" width="1" height="31" fill="#d2d2d2"/>
<rect x="618" y="420" width="1" height="31" fill="#d2d2d2"/>
<rect x="626" y="420" width="1" height="31" fill="#d2d2d2"/>
<rect x="634" y="420" width="1" height="31" fill="#d2d2d2"/>
<rect x="642" y="420" width="1" height="30" fill="#d2d2d2"/>
<rect x="650" y="420" width="1" height="31" fill="#d2d2d2"/>
<rect x="658" y="420" width="1" height="31" fill="#d2d2d2"/>
<rect x="666" y="420" width="1" height="30" fill="#d2d2d2"/>
<rect x="674" y="420" width="1" height="30" fill="#d2d2d2"/>
<rect x="682" y="420" width="1" height="30" fill="#d2d2d2"/>
<rect x="690" y="420" width="1" height="30" fill="#d2d2d2"/>
<rect x="698" y="420" width="1" height="30" fill="#d2d2d2"/>
<rect x="706" y="420" width="1" height="30" fill="#d2d2d2"/>
<rect x="714" y="420" width="1" height="30" fill="#d2d2d2"/>
<rect x="722" y="420" width="1" height="30" fill="#d2d2d2"/>
<rect x="730" y="420" width="1" height="30" fill="#d2d2d2"/>
<rect x="738" y="420" width="1" height="26" fill="#d2d2d2"/>
<rect x="746" y="420" width="1" height="23" fill="#d2d2d2"/>
<rect x="754" y="420" width="1" height="20" fill="#d2d2d2"/>
<rect x="762" y="420" width="1" height="19" fill="#d2d2d2"/>
<rect x="770" y="420" width="1" height="18" fill="#d2d2d2"/>
<rect x="778" y="420" width="1" height="18" fill="#d2d2d2"/>
<rect x="786" y="420" width="1" height="18" fill="#d2d2d2"/>
<rect x="794" y="420" width="1" height="18" fill="#d2d2d2"/>
<rect x="802" y="420" width="1" height="16" fill="#d2d2d2"/>
<rect x="810" y="420" width="1" height="14" fill="#d2d2d2"/>
<rect x="818" y="420" width="1" height="10" fill="#d2d2d2"/>
<rect x="826" y="420" width="1" height="8" fill="#d2d2d2"/>
<rect x="834" y="420" width="1" height="6" fill="#d2d2d2"/>
<rect x="842" y="420" width="1" height="3" fill="#d2d2d2"/>
<rect x="850" y="420" width="1" height="2" fill="#d2d2d2"/>
<rect x="858" y="420" width="1" height="1" fill="#d2d2d2"/>
<rect x="866" y="418" width="1" height="3" fill="#d2d2d2"/>
<rect x="874" y="416" width="1" height="5" fill="#d2d2d2"/>
<rect x="882" y="415" width="1" height="6" fill="#d2d2d2"/>
<rect x="890" y="414" width="1" height="7" fill="#d2d2d2"/>
<rect x="898" y="412" width="1" height="9" fill="#d2d2d2"/>
<rect x="906" y="412" width="1" height="9" fill="#d2d2d2"/>
<rect x="914" y="410" width="1" height="11" fill="#d2d2d2"/>
<rect x="922" y="408" width="1" height="13" fill="#d2d2d2"/>
<rect x="930" y="406" width="1" height="15" fill="#d2d2d2"/>
<rect x="938" y="404" width="1" height="17" fill="#d2d2d2"/>
<rect x="946" y="406" width="1" height="15" fill="#d2d2d2"/>
<rect x="954" y="408" width="1" height="13" fill="#d2d2d2"/>
<rect x="962" y="410" width="1" height="11" fill="#d2d2d2"/>
<rect x="970" y="410" width="1" height="11" fill="#d2d2d2"/>
<rect x="978" y="411" width="1" height="10" fill="#d2d2d2"/>
<rect x="986" y="412" width="1" height="9" fill="#d2d2d2"/>
<rect x="994" y="412" width="1" height="9" fill="#d2d2d2"/>
<rect x="1002" y="412" width="1" height="9" fill="#d2d2d2"/>
<rect x="1010" y="412" width="1" height="9" fill="#d2d2d2"/>
<rect x="1018" y="413" width="1" height="8" fill="#d2d2d2"/>
<rect x="1026" y="418" width="1" height="3" fill="#d2d2d2"/>
<rect x="1034" y="420" width="1" height="1" fill="#d2d2d2"/>
<rect x="1042" y="420" width="1" height="2" fill="#d2d2d2"/>
<rect x="1050" y="420" width="1" height="6" fill="#d2d2d2"/>
<rect x="1058" y="420" width="1" height="10" fill="#d2d2d2"/>
<rect x="1066" y="420" width="1" height="14" fill="#d2d2d2"/>
<rect x="1074" y="420" width="1" height="21" fill="#d2d2d2"/>
<rect x="1082" y="420" width="1" height="26" fill="#d2d2d2"/>
<rect x="1090" y="420" width="1" height="29" fill="#d2d2d2"/>
<rect x="1098" y="420" width="1" height="26" fill="#d2d2d2"/>
<rect x="1106" y="420" width="1" height="25" fill="#d2d2d2"/>
<rect x="1114" y="420" width="1" height="23" fill="#d2d2d2"/>
<rect x="1122" y="420" width="1" height="22" fill="#d2d2d2"/>
<rect x="1130" y="420" width="1" height="21" fill="#d2d2d2"/>
<rect x="1138" y="420" width="1" height="20" fill="#d2d2d2"/>
<rect x="1146" y="420" width="1" height="20" fill="#d2d2d2"/>
<rect x="1154" y="420" width="1" height="16" fill="#d2d2d2"/>
<rect x="1162" y="420" width="1" height="13" fill="#d2d2d2"/>
<rect x="1170" y="420" width="1" height="12" fill="#d2d2d2"/>
</g>
<g clip-path="url(#cs)"><polyline points="255,439.5 290,435 315,429.5 340,426.2 352.4,425 377.4,426.2 394.9,431.2 414.9,440 439.9,452.5 464.8,458.7 479.8,460.4 502.3,456.2 527.3,451.2 552.3,448.7 580,449.5 607.5,451.2 670,451.2 730,450.5 757.4,447.5 782.4,443.7 807.3,439.5 832.3,435 857.3,427.5 882.3,421.2 910,416.2 925,412 950,408.7 1000,409.5 1022.4,412 1050,417.5 1074.9,426.2 1099.9,436.2 1119.8,442 1139.8,444.2 1154.8,442.5 1169.8,439.5" fill="none" stroke="#cc2020" stroke-width="1" stroke-dasharray="2.5 2.5"/></g>
<g shape-rendering="crispEdges" fill="#fff">
<rect x="1" y="10" width="1318" height="1"/>
<rect x="1" y="10" width="1" height="457"/>
<rect x="1318" y="10" width="1" height="457"/>
<rect x="1" y="398" width="1318" height="1"/>
<rect x="1" y="400" width="1318" height="1"/>
<rect x="1" y="466" width="1318" height="1"/>
</g>
<path d="M1180 11 h10 l-5 5 z" fill="#8c8ca0"/>
<g font-family="'Liberation Sans', Arial, sans-serif" font-size="9.8" fill="#fff" text-rendering="geometricPrecision">
<rect x="1319" y="23" width="3" height="1" shape-rendering="crispEdges"/>
<text transform="translate(1325,26.1) scale(0.95,1)" >1.10275</text>
<rect x="1319" y="57" width="3" height="1" shape-rendering="crispEdges"/>
<text transform="translate(1325,60.1) scale(0.95,1)" >1.10195</text>
<rect x="1319" y="90" width="3" height="1" shape-rendering="crispEdges"/>
<text transform="translate(1325,94) scale(0.95,1)" >1.10115</text>
<rect x="1319" y="124" width="3" height="1" shape-rendering="crispEdges"/>
<text transform="translate(1325,128) scale(0.95,1)" >1.10035</text>
<rect x="1319" y="158" width="3" height="1" shape-rendering="crispEdges"/>
<text transform="translate(1325,161.9) scale(0.95,1)" >1.09955</text>
<rect x="1319" y="192" width="3" height="1" shape-rendering="crispEdges"/>
<text transform="translate(1325,195.8) scale(0.95,1)" >1.09875</text>
<rect x="1319" y="226" width="3" height="1" shape-rendering="crispEdges"/>
<text transform="translate(1325,229.8) scale(0.95,1)" >1.09795</text>
<rect x="1319" y="260" width="3" height="1" shape-rendering="crispEdges"/>
<text transform="translate(1325,263.8) scale(0.95,1)" >1.09715</text>
<rect x="1319" y="294" width="3" height="1" shape-rendering="crispEdges"/>
<text transform="translate(1325,297.8) scale(0.95,1)" >1.09635</text>
<rect x="1319" y="329" width="3" height="1" shape-rendering="crispEdges"/>
<text transform="translate(1325,332.4) scale(0.95,1)" >1.09555</text>
<rect x="1319" y="362" width="3" height="1" shape-rendering="crispEdges"/>
<text transform="translate(1325,365.5) scale(0.95,1)" >1.09475</text>
<rect x="1319" y="395" width="3" height="1" shape-rendering="crispEdges"/>
<text transform="translate(1325,398.5) scale(0.95,1)" >1.09395</text>
<text transform="translate(1321,411) scale(0.95,1)" >0.000372</text>
<rect x="1319" y="420" width="3" height="1" shape-rendering="crispEdges"/>
<text transform="translate(1322,424) scale(0.95,1)" font-weight="bold">0.00</text>
<text transform="translate(1321,464.2) scale(0.95,1)" >-0.000892</text>
<rect x="1320" y="307" width="41" height="11" fill="#eeee9c" shape-rendering="crispEdges"/>
<text transform="translate(1325,316.5) scale(0.95,1)" fill="#000">1.09589</text>
<rect x="1320" y="300" width="41" height="11" fill="#eeee9c" shape-rendering="crispEdges"/>
<text transform="translate(1325,309.6) scale(0.95,1)" fill="#000">1.09605</text>
<rect x="2" y="467" width="1" height="3" shape-rendering="crispEdges"/>
<text transform="translate(1,479) scale(0.95,1)" >26 Feb 14:46</text>
<rect x="258" y="467" width="1" height="3" shape-rendering="crispEdges"/>
<text transform="translate(257,479) scale(0.95,1)" >26 Feb 15:18</text>
<rect x="322" y="467" width="1" height="3" shape-rendering="crispEdges"/>
<text transform="translate(321,479) scale(0.95,1)" >26 Feb 15:26</text>
<rect x="386" y="467" width="1" height="3" shape-rendering="crispEdges"/>
<text transform="translate(385,479) scale(0.95,1)" >26 Feb 15:34</text>
<rect x="450" y="467" width="1" height="3" shape-rendering="crispEdges"/>
<text transform="translate(449,479) scale(0.95,1)" >26 Feb 15:42</text>
<rect x="514" y="467" width="1" height="3" shape-rendering="crispEdges"/>
<text transform="translate(513,479) scale(0.95,1)" >26 Feb 15:50</text>
<rect x="578" y="467" width="1" height="3" shape-rendering="crispEdges"/>
<text transform="translate(577,479) scale(0.95,1)" >26 Feb 15:58</text>
<rect x="642" y="467" width="1" height="3" shape-rendering="crispEdges"/>
<text transform="translate(641,479) scale(0.95,1)" >26 Feb 16:06</text>
<rect x="706" y="467" width="1" height="3" shape-rendering="crispEdges"/>
<text transform="translate(705,479) scale(0.95,1)" >26 Feb 16:14</text>
<rect x="770" y="467" width="1" height="3" shape-rendering="crispEdges"/>
<text transform="translate(769,479) scale(0.95,1)" >26 Feb 16:22</text>
<rect x="834" y="467" width="1" height="3" shape-rendering="crispEdges"/>
<text transform="translate(833,479) scale(0.95,1)" >26 Feb 16:30</text>
<rect x="898" y="467" width="1" height="3" shape-rendering="crispEdges"/>
<text transform="translate(897,479) scale(0.95,1)" >26 Feb 16:38</text>
<rect x="962" y="467" width="1" height="3" shape-rendering="crispEdges"/>
<text transform="translate(961,479) scale(0.95,1)" >26 Feb 16:46</text>
<rect x="1026" y="467" width="1" height="3" shape-rendering="crispEdges"/>
<text transform="translate(1025,479) scale(0.95,1)" >26 Feb 16:54</text>
<rect x="1090" y="467" width="1" height="3" shape-rendering="crispEdges"/>
<text transform="translate(1089,479) scale(0.95,1)" >26 Feb 17:02</text>
<rect x="1154" y="467" width="1" height="3" shape-rendering="crispEdges"/>
<text transform="translate(1153,479) scale(0.95,1)" >26 Feb 17:10</text>
<path d="M5 17 h7 l-3.5 3.8 z" fill="#fff"/>
<text transform="translate(17.7,22) scale(0.95,1)" >EURUSD.fix,M1&#160; 1.09628 1.09628 1.09587 1.09589</text>
</g>
</svg>
<div class="dlg" style="left:7px;top:25px">
<div class="ttl"><span>EURUSD.fix, Euro vs US Dollar</span><i class="cls"><svg width="8" height="9" viewBox="0 0 8 9"><path d="M1.5 1.5 L6.5 7 M6.5 1.5 L1.5 7" stroke="#000" stroke-width="1.3" fill="none"/></svg></i></div>
<div class="lst">
<div class="hd"><div class="h1">Prix</div><div class="h2">&amp;Trading</div></div>
<div class="r ask"><div class="p">1.09608</div><div class="t"><i class="b dn red"></i><i class="b up gry"></i></div></div>
<div class="r ask"><div class="p">1.09607</div><div class="t"><i class="b dn red"></i><i class="b up gry"></i></div></div>
<div class="r ask"><div class="p">1.09606</div><div class="t"><i class="b dn red"></i><i class="b up gry"></i></div></div>
<div class="r ask"><div class="p">1.09605</div><div class="t"><i class="b dn red"></i><i class="b up gry"></i></div></div>
<div class="r bid first"><div class="p">1.09589</div><div class="t"><i class="b dn gry"></i><i class="b up blu"></i></div></div>
<div class="r bid"><div class="p">1.09588</div><div class="t"><i class="b dn gry"></i><i class="b up blu"></i></div></div>
<div class="r bid"><div class="p">1.09587</div><div class="t"><i class="b dn gry"></i><i class="b up blu"></i></div></div>
<div class="r bid"><div class="p">1.09586</div><div class="t"><i class="b dn gry"></i><i class="b up blu"></i></div></div>
</div>
<div class="spn">
<div class="sg" style="left:0;width:75px"><i class="ab d"></i><div class="fld" style="width:35px"><em>sl</em><b>0</b></div><i class="ab u"></i></div>
<div class="sg" style="left:76px;width:78px"><i class="ab d"></i><div class="fld" style="width:38px"><b>3.00</b></div><i class="ab u"></i></div>
<div class="sg" style="left:155px;width:76px"><i class="ab d"></i><div class="fld" style="width:36px"><em>tp</em><b>50</b></div><i class="ab u"></i></div>
</div>
<div class="btns"><div class="bt sell">Vente</div><div class="bt cl">Fermer</div><div class="bt buy">Acheter</div></div>
</div>
<div id="ctl"></div>
<div id="ctabs">
<span style="right:1038.5px">Germany30,M1</span><i style="left:335px"></i>
<span style="left:346px">#HongKong50,M5</span><i style="left:443px"></i>
<span style="left:452px">EURJPY.fix,M5</span>
<span style="left:641.5px">EURUSD.fix,M1</span><i style="left:727px"></i>
<svg style="position:absolute;left:1329px;top:4px" width="26" height="9" viewBox="0 0 26 9"><path d="M6 0.5 v8 l-4 -4 z M20 0.5 v8 l4 -4 z" fill="#a8a49c"/></svg>
</div>
<div id="atab"><span>EURUSD.fix,M1</span></div>
<div id="tsep"></div>
<div id="tx">x</div>
<div id="tside"><span>Terminal</span></div>
<div id="tbl"></div><div class="abs" style="left:12px;top:513px;width:1347px;height:1px;background:#808080"></div>
<div class="th" style="left:12px;width:129px"></div>
<div class="th" style="left:141px;width:109px"></div>
<div class="th" style="left:250px;width:91px"><span style="right:6px">Transaction</span></div>
<div class="th" style="left:341px;width:72px"><span style="right:6px">Volume</span></div>
<div class="th" style="left:413px;width:82px"><span style="right:6px">Symbole</span></div>
<div class="th" style="left:495px;width:91px"><span style="right:6px">Prix</span></div>
<div class="th" style="left:586px;width:91px"><span style="right:6px">S/L (Stop/Perte)</span></div>
<div class="th" style="left:677px;width:91px"><span style="right:6px">T/P (Prendre/...</span></div>
<div class="th" style="left:768px;width:200px"><span style="right:26px">Heure</span><svg style="position:absolute;left:186px;top:4px" width="9" height="8" viewBox="0 0 9 8"><path d="M0.5 0.5 h8 l-4 7 z" fill="#f4f4f0" stroke="#808080" stroke-width="1"/></svg></div>
<div class="th" style="left:968px;width:91px"><span style="right:6px">Prix</span></div>
<div class="th" style="left:1059px;width:91px"><span style="right:6px">Echange</span></div>
<div class="th" style="left:1150px;width:104px"><span style="right:6.5px">&amp;Profit</span></div>
<div class="th" style="left:1254px;width:89px"></div>
<div class="tr " style="top:531px"><svg class="ic" width="16" height="16" viewBox="0 0 16 16"><path d="M1.5 1.5 h6.5 l3 3 v9 h-9.5 z" fill="#fff" stroke="#606060" stroke-width="1"/><path d="M8 1.5 v3 h3" fill="none" stroke="#606060" stroke-width="1"/><circle cx="10.5" cy="11.5" r="3.2" fill="#e0502a" stroke="#a02808" stroke-width="0.8"/></svg><span class="c" style="left:23px">..</span><span class="c" style="left:132.3px">2016.02.26 11:45:43</span><span class="c" style="right:917px">sell</span><span class="c" style="right:844.5px">3.00</span><span class="c" style="right:763px">eurusd.fix</span><span class="c" style="right:672px">1.09636</span><span class="c" style="right:581px">0.00000</span><span class="c" style="right:490px">1.09586</span><span class="c" style="right:289.7px">2016.02.26 16:57:36</span><span class="c" style="right:198.7px">1.09618</span><span class="c" style="right:108px">0.00</span><span class="c" style="right:5px">49.26</span></div>
<div class="tr alt" style="top:551px"><svg class="ic" width="16" height="16" viewBox="0 0 16 16"><path d="M1.5 1.5 h6.5 l3 3 v9 h-9.5 z" fill="#fff" stroke="#606060" stroke-width="1"/><path d="M8 1.5 v3 h3" fill="none" stroke="#606060" stroke-width="1"/><circle cx="10.5" cy="11.5" r="3.2" fill="#3a8ee0" stroke="#1a5aa8" stroke-width="0.8"/></svg><span class="c" style="left:23px">..</span><span class="c" style="left:132.3px">2016.02.26 11:45:43</span><span class="c" style="right:917px">buy</span><span class="c" style="right:844.5px">3.00</span><span class="c" style="right:763px">eurusd.fix</span><span class="c" style="right:672px">1.10168</span><span class="c" style="right:581px">0.00000</span><span class="c" style="right:490px">1.10346</span><span class="c" style="right:289.7px">2016.02.26 13:02:19</span><span class="c" style="right:198.7px">1.10188</span><span class="c" style="right:108px">0.00</span><span class="c" style="right:5px">54.45</span></div>
<div class="tr " style="top:571px"><div class="gc"></div><svg class="ic" width="16" height="16" viewBox="0 0 16 16"><path d="M1.5 1.5 h6.5 l3 3 v9 h-9.5 z" fill="#fff" stroke="#606060" stroke-width="1"/><path d="M8 1.5 v3 h3" fill="none" stroke="#606060" stroke-width="1"/><circle cx="10.5" cy="11.5" r="3.2" fill="#e0502a" stroke="#a02808" stroke-width="0.8"/></svg><span class="c" style="left:23px">..</span><span class="c" style="left:132.3px">2016.02.26 11:03:56</span><span class="c" style="right:917px">sell</span><span class="c" style="right:844.5px">3.00</span><span class="c" style="right:763px">eurusd.fix</span><span class="c" style="right:672px">1.10138</span><span class="c" style="right:581px">0.00000</span><span class="c" style="right:490px">1.10088</span><span class="c" style="right:289.7px">2016.02.26 11:10:16</span><span class="c" style="right:198.7px">1.10088</span><span class="c" style="right:108px">0.00</span><span class="c" style="right:5px">136.25</span></div>
<div class="tr alt" style="top:591px"><div class="gc"></div><svg class="ic" width="16" height="16" viewBox="0 0 16 16"><path d="M1.5 1.5 h6.5 l3 3 v9 h-9.5 z" fill="#fff" stroke="#606060" stroke-width="1"/><path d="M8 1.5 v3 h3" fill="none" stroke="#606060" stroke-width="1"/><circle cx="10.5" cy="11.5" r="3.2" fill="#e0502a" stroke="#a02808" stroke-width="0.8"/></svg><span class="c" style="left:23px">..</span><span class="c" style="left:132.3px">2016.02.26 11:05:56</span><span class="c" style="right:917px">sell</span><span class="c" style="right:844.5px">1.00</span><span class="c" style="right:763px">eurusd.fix</span><span class="c" style="right:672px">1.10147</span><span class="c" style="right:581px">0.00000</span><span class="c" style="right:490px">1.10097</span><span class="c" style="right:289.7px">2016.02.26 11:10:16</span><span class="c" style="right:198.7px">1.10097</span><span class="c" style="right:108px">0.00</span><span class="c" style="right:5px">45.41</span></div>
<div class="tr " style="top:611px"><svg class="ic" width="16" height="16" viewBox="0 0 16 16"><path d="M1.5 1.5 h6.5 l3 3 v9 h-9.5 z" fill="#fff" stroke="#606060" stroke-width="1"/><path d="M8 1.5 v3 h3" fill="none" stroke="#606060" stroke-width="1"/><circle cx="10.5" cy="11.5" r="3.2" fill="#e0502a" stroke="#a02808" stroke-width="0.8"/></svg><span class="c" style="left:23px">..</span><span class="c" style="left:132.3px">2016.02.26 03:40:07</span><span class="c" style="right:917px">sell</span><span class="c" style="right:844.5px">3.00</span><span class="c" style="right:763px">eurusd.fix</span><span class="c" style="right:672px">1.10460</span><span class="c" style="right:581px">0.00000</span><span class="c" style="right:490px">1.10319</span><span class="c" style="right:289.7px">2016.02.26 10:04:59</span><span class="c" style="right:198.7px">1.10441</span><span class="c" style="right:108px">0.00</span><span class="c" style="right:5px">51.61</span></div>
<div class="abs" style="left:678px;top:630px;width:88px;height:3px;background:#5fe85f"></div>
<div class="abs" style="left:1355px;top:581px;width:3px;height:30px;background:#5fe85f;display:none"></div>
<div class="abs" style="left:675px;top:571px;width:3px;height:40px;background:#5fe85f;display:none"></div>
<div id="sb"><div class="sbb u" style="top:0"></div><div class="sbb" style="top:16px;height:8px"></div><div class="sbb d" style="top:103px"></div></div>
<div id="tbot"></div>
<div id="ttabs">
<span style="left:13px"><u>T</u>rading</span><i style="left:66px"></i>
<span style="left:75.5px">Exposition</span>
<span style="left:266px">Nouvelles</span><b style="left:317px">99</b><i style="left:337px"></i>
<span style="left:346.5px">Alertes</span><i style="left:391px"></i>
<span style="left:400.5px">Messagerie</span><b style="left:457px">5</b><i style="left:472px"></i>
<span style="left:481.5px">Marché</span><b style="left:519px">80</b><i style="left:539px"></i>
<span style="left:548.5px">Signaux</span><i style="left:597px"></i>
<span style="left:606.5px">Bibliotheque</span><i style="left:675px"></i>
<span style="left:684px">Experts</span><i style="left:732px"></i>
<span style="left:741.5px">Journal</span><i style="left:788px"></i>
</div>
<div id="tatab"><span>Historique du compte</span></div>
<div id="sl1"></div><div id="sl2"></div>
<div id="st">
<span style="left:-1px">Pour plus d'informations, appuyer F1</span>
<i style="left:682px"></i><span style="left:688.5px">Default</span>
<i style="left:792px"></i><i style="left:893px"></i><i style="left:965px"></i><i style="left:1036px"></i><i style="left:1105px"></i><i style="left:1176px"></i><i style="left:1242px"></i>
<svg style="position:absolute;left:1248px;top:7px" width="23" height="13" viewBox="0 0 23 13" shape-rendering="crispEdges">
<rect x="0" y="0" width="1.6" height="9" fill="#6a9a18"/><rect x="0" y="9" width="1.6" height="4" fill="#1a4a8a"/><rect x="2.5" y="0" width="1.6" height="8" fill="#6a9a18"/><rect x="2.5" y="8" width="1.6" height="5" fill="#1a4a8a"/><rect x="5" y="0" width="1.6" height="7" fill="#6a9a18"/><rect x="5" y="7" width="1.6" height="6" fill="#1a4a8a"/><rect x="7.5" y="0" width="1.6" height="6" fill="#6a9a18"/><rect x="7.5" y="6" width="1.6" height="7" fill="#1a4a8a"/><rect x="10" y="0" width="1.6" height="5" fill="#6a9a18"/><rect x="10" y="5" width="1.6" height="8" fill="#1a4a8a"/><rect x="12.5" y="0" width="1.6" height="4" fill="#6a9a18"/><rect x="12.5" y="4" width="1.6" height="9" fill="#1a4a8a"/><rect x="15" y="0" width="1.6" height="3" fill="#6a9a18"/><rect x="15" y="3" width="1.6" height="10" fill="#1a4a8a"/><rect x="17.5" y="0" width="1.6" height="2" fill="#6a9a18"/><rect x="17.5" y="2" width="1.6" height="11" fill="#1a4a8a"/><rect x="20" y="0" width="1.6" height="1" fill="#6a9a18"/><rect x="20" y="1" width="1.6" height="12" fill="#1a4a8a"/>
</svg>
<span style="left:1275px">86075/38 kb</span>
</div>
<div id="stb"></div>
<div class="dlg" style="left:8px;top:291px">
<div class="ttl"><span>EURUSD.fix, Euro vs US Dollar</span><i class="cls"><svg width="8" height="9" viewBox="0 0 8 9"><path d="M1.5 1.5 L6.5 7 M6.5 1.5 L1.5 7" stroke="#000" stroke-width="1.3" fill="none"/></svg></i></div>
<div class="lst">
<div class="hd"><div class="h1">Prix</div><div class="h2">&amp;Trading</div></div>
<div class="r ask"><div class="p">1.09608</div><div class="t"><i class="b dn red"></i><i class="b up gry"></i></div></div>
<div class="r ask"><div class="p">1.09607</div><div class="t"><i class="b dn red"></i><i class="b up gry"></i></div></div>
<div class="r ask"><div class="p">1.09606</div><div class="t"><i class="b dn red"></i><i class="b up gry"></i></div></div>
<div class="r ask"><div class="p">1.09605</div><div class="t"><i class="b dn red"></i><i class="b up gry"></i></div></div>
<div class="r bid first"><div class="p">1.09589</div><div class="t"><i class="b dn gry"></i><i class="b up blu"></i></div></div>
<div class="r bid"><div class="p">1.09588</div><div class="t"><i class="b dn gry"></i><i class="b up blu"></i></div></div>
<div class="r bid"><div class="p">1.09587</div><div class="t"><i class="b dn gry"></i><i class="b up blu"></i></div></div>
<div class="r bid"><div class="p">1.09586</div><div class="t"><i class="b dn gry"></i><i class="b up blu"></i></div></div>
</div>
<div class="spn">
<div class="sg" style="left:0;width:75px"><i class="ab d"></i><div class="fld" style="width:35px"><em>sl</em><b>0</b></div><i class="ab u"></i></div>
<div class="sg" style="left:76px;width:78px"><i class="ab d"></i><div class="fld" style="width:38px"><b>0.01</b></div><i class="ab u"></i></div>
<div class="sg" style="left:155px;width:76px"><i class="ab d"></i><div class="fld" style="width:36px"><em>tp</em><b>50</b></div><i class="ab u"></i></div>
</div>
<div class="btns"><div class="bt sell">Vente</div><div class="bt cl">Fermer</div><div class="bt buy">Acheter</div></div>
</div>
</body></html>
